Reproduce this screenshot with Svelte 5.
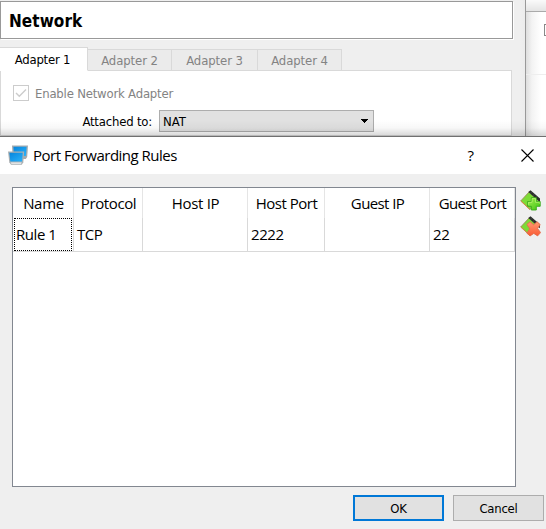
<script>
  const tabs = [
    { label: 'Adapter 1', width: 88, active: true },
    { label: 'Adapter 2', width: 84 },
    { label: 'Adapter 3', width: 86 },
    { label: 'Adapter 4', width: 84 }
  ];
  const columns = [
    { name: 'Name', value: 'Rule 1', width: 61, spacing: -0.3 },
    { name: 'Protocol', value: 'TCP', width: 69, spacing: -0.4 },
    { name: 'Host IP', value: '', width: 105, spacing: -0.3 },
    { name: 'Host Port', value: '2222', width: 77, spacing: -0.5 },
    { name: 'Guest IP', value: '', width: 105, spacing: -0.6 },
    { name: 'Guest Port', value: '22', width: 85, spacing: -0.7 }
  ];
</script>

<div class="screen">
  <div class="back">
    <section class="settings">
      <h1><span>Network</span></h1>
      <div class="tabs">
        {#each tabs as tab}
          <button class="tab" class:active={tab.active} style="width: {tab.width}px"><span>{tab.label}</span></button>
        {/each}
      </div>
      <div class="pane">
        <label class="enable">
          <svg width="16" height="16" viewBox="0 0 16 16"><rect x=".5" y=".5" width="15" height="15" fill="#fff" stroke="#ccc"/><path d="M3 8l3.3 3.3L13 4.6" fill="none" stroke="#ccc" stroke-width="1.4"/></svg>
          <span>Enable Network Adapter</span>
        </label>
        <div class="attach">
          <span class="caption">Attached to:</span>
          <div class="select"><span>NAT</span><svg width="8" height="4" viewBox="0 0 8 4" shape-rendering="crispEdges"><path d="M0 0h7v1h-1v1h-1v1h-1v1h-1v-1h-1v-1h-1v-1h-1z" fill="#000"/></svg></div>
        </div>
      </div>
    </section>
    <aside>
      <div class="strip"></div>
      <div class="region"><i></i></div>
      <div class="rest"></div>
    </aside>
    <div class="shade"></div>
  </div>

  <section class="dialog">
    <header>
      <svg class="logo" width="21" height="21" viewBox="0 0 21 21">
        <defs><linearGradient id="blue" x1="0" y1="0" x2="1" y2="1"><stop offset="0" stop-color="#0785dc"/><stop offset="1" stop-color="#28b2fb"/></linearGradient></defs>
        <path d="M4 .5h16l-.8 11.5-1.4 2H6L4.6 12z" fill="#a3abb0"/><path d="M5.4 1.7h13.2l-.7 9.3H6z" fill="url(#blue)"/>
        <path d="M0 6.5h16.2l-.9 10.7-1.5 2.5H3l-1.7-2.5z" fill="#a9afb2"/><path d="M1.4 7.8h13.4L14 16.5H2.3z" fill="url(#blue)"/><path d="M2.7 17.5h11l-.6 1.2H3.4z" fill="#f4f4f4"/>
      </svg>
      <span class="title">Port Forwarding Rules</span>
      <span class="help">?</span>
      <svg class="close" width="13" height="13" viewBox="0 0 13 13"><path d="M.5.5l12 12M12.5.5l-12 12" stroke="#000" stroke-width="1.1"/></svg>
    </header>
    <div class="content">
      <div class="table">
        <div class="row head">
          {#each columns as col}<div class="cell" style="width: {col.width}px"><span style="letter-spacing: {col.spacing}px">{col.name}</span></div>{/each}
        </div>
        <div class="row data">
          {#each columns as col, i}<div class="cell" class:focus={i === 0} style="width: {col.width}px"><span>{col.value}</span></div>{/each}
        </div>
      </div>
      <div class="tools">
        {#each ['add', 'remove'] as action}
          <svg width="21" height="21" viewBox="0 0 21 21" role="img" aria-label={action}>
            <defs>
              <linearGradient id="green" x1="0" y1="0" x2="1" y2="1"><stop offset="0" stop-color="#a4ed52"/><stop offset="1" stop-color="#3fc612"/></linearGradient>
              <linearGradient id="red" x1="0" y1="0" x2="0" y2="1"><stop offset="0" stop-color="#ff9a70"/><stop offset="1" stop-color="#fa5a35"/></linearGradient>
            </defs>
            <path d="M.7 11L9.3 1.8 18 10.5 10 19.5z" fill="#7ddb36" stroke="#9a8a55" stroke-width=".9"/>
            <path d="M1.2 11.2l8.5 8" stroke="#e08747" stroke-width="1"/>
            <path d="M8.3 2L10.5.3 20 8.6v3.6z" fill="#292e2a"/>
            <path d="M11.5 2.2l-1 1.3M14 4.3l-1 1.4M16.5 6.5l-1 1.4" stroke="#666" stroke-width=".5"/>
            {#if action === 'add'}
              <path d="M11.3 7.7h5v3.8h3.9v4.8h-3.9V20h-5v-3.7H7.6v-4.8h3.7z" fill="url(#green)" stroke="#36a719" stroke-width=".9" stroke-linejoin="round"/>
              <path d="M12.1 8.5h3.4v3.8h3.8v1.5M12.1 8.5v3.8H8.4v2.5" fill="none" stroke="#b6f26e" stroke-width=".8"/>
            {:else}
              <path d="M6.9 8.4l3.2-2.6 3.5 2.9L17.1 5.8l3.1 2.8-2.6 4 3 4-3 3.3-3.8-2.5-3.7 2.5-3.2-2.7 2.8-4.4z" fill="url(#red)" stroke="#e36d4c" stroke-width=".9" stroke-linejoin="round"/>
            {/if}
          </svg>
        {/each}
      </div>
    </div>
    <footer>
      <button class="ok"><span>OK</span></button>
      <button><span>Cancel</span></button>
    </footer>
  </section>
</div>

<style>
  :global(body) { margin: 0; }
  * { box-sizing: border-box; }
  .screen { width: 546px; height: 529px; overflow: hidden; display: flex; flex-direction: column; background: #efefef; color: #000; font: 13px/16px "DejaVu Sans Condensed", "DejaVu Sans", sans-serif; white-space: nowrap; }
  span { display: inline-block; }
  svg { flex: none; }
  button { font: inherit; color: inherit; padding: 0; margin: 0; border-radius: 0; }
  .back { position: relative; display: flex; height: 136px; overflow: hidden; }
  .settings { width: 526px; flex: none; border-right: 1px solid #999; padding-top: 1px; background: linear-gradient(90deg, #efefef 0 520px, #ebebeb 526px); }
  h1 { margin: 0; width: 513px; height: 38px; border: 1px solid #999; box-shadow: 1px 1px #fff; background: #fff; font-size: 17px; line-height: 20px; padding: 9px 0 0 8px; }
  h1 span { letter-spacing: .05px; }
  .tabs { display: flex; align-items: flex-end; height: 24px; margin-top: 8px; position: relative; }
  .tab { height: 22px; border: 1px solid #d9d9d9; border-left: 0; background: #ebebeb; color: #838383; padding-top: 1px; line-height: 16px; letter-spacing: -.1px; }
  .tab.active { height: 24px; background: #fff; color: #000; border-bottom-color: #fff; letter-spacing: -.2px; padding-right: 2px; }
  .pane { width: 512px; height: 66px; margin-top: -1px; border: 1px solid #d9d9d9; background: #fff; }
  .enable { display: flex; align-items: center; gap: 6px; margin: 14px 0 0 12px; height: 16px; color: #838383; letter-spacing: -.2px; }
  .enable span { padding-top: 1px; }
  .attach { display: flex; margin-top: 9px; height: 22px; }
  .caption { width: 151px; text-align: right; padding-top: 4px; letter-spacing: -.2px; }
  .select { width: 215px; height: 22px; margin-left: 7px; padding: 0 4px 0 3px; border: 1px solid #adadad; background: #e1e1e1; display: flex; align-items: center; justify-content: space-between; }
  .select span { padding-top: 2px; }
  aside { flex: 1; min-width: 0; background: #fff; }
  .strip { height: 12px; border-bottom: 1px solid #aaa; background: linear-gradient(#fafafa, #e4e4e4); }
  .region { height: 63px; border-bottom: 1px solid #eee; padding: 12px 0 0 18px; overflow: hidden; background: linear-gradient(90deg, #dedede, #f3f3f3 6px, #fff 15px); }
  .region i { display: block; width: 12px; height: 12px; border: 1px solid #888; }
  .rest { height: 61px; background: linear-gradient(90deg, #dedede, #f3f3f3 6px, #fff 15px); }
  .shade { position: absolute; left: 0; right: 0; bottom: 0; height: 16px; background: linear-gradient(transparent, rgba(0,0,0,.03) 50%, rgba(0,0,0,.16)); }
  .dialog { flex: 1; border-top: 1px solid #707070; font: 15px/20px "Open Sans", "Noto Sans", sans-serif; }
  header { height: 37px; background: #fff; display: flex; align-items: center; padding: 0 12px 0 8px; }
  .title { margin-left: 4px; letter-spacing: -.5px; padding-bottom: 2px; }
  .help { margin-left: auto; padding-bottom: 2px; }
  .close { margin-left: 47px; }
  .content { display: flex; height: 313px; padding: 13px 0 0 12px; }
  .table { width: 504px; height: 300px; background: #fff; border: 1px solid #828790; }
  .row { display: flex; }
  .cell { border-right: 1px solid #d9d9d9; height: 100%; }
  .head { height: 30px; }
  .head .cell { border-color: #e5e5e5; text-align: center; padding: 5px 0 0 1px; }
  .data { height: 34px; letter-spacing: -.45px; }
  .data .cell { border-bottom: 1px solid #d9d9d9; padding: 6px 0 0 3px; }
  .data .focus { position: relative; }
  .focus::after { content: ""; position: absolute; inset: 0 1px 0 1px; border: 1px dotted #000; }
  .tools { display: flex; flex-direction: column; gap: 5px; padding: 3px 0 0 4px; }
  footer { display: flex; gap: 9px; justify-content: flex-end; padding: 8px 2px 0 0; font: 13px/16px "DejaVu Sans Condensed", "DejaVu Sans", sans-serif; }
  footer button { width: 91px; height: 26px; border: 1px solid #adadad; background: #e1e1e1; }
  footer button span { padding-top: 2px; letter-spacing: -.25px; }
  footer .ok { border: 2px solid #0078d7; }
</style>
